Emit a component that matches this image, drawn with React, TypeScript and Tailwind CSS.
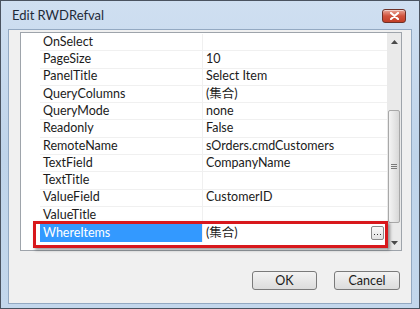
import React from "react";

const rows: [string, string][] = [
  ["OnSelect", ""],
  ["PageSize", "10"],
  ["PanelTitle", "Select Item"],
  ["QueryColumns", "(集合)"],
  ["QueryMode", "none"],
  ["Readonly", "False"],
  ["RemoteName", "sOrders.cmdCustomers"],
  ["TextField", "CompanyName"],
  ["TextTitle", ""],
  ["ValueField", "CustomerID"],
  ["ValueTitle", ""],
  ["WhereItems", "(集合)"],
];

const font = { fontFamily: 'Lato, "Noto Sans CJK TC", sans-serif' };

export default function App() {
  return (
    <div
      className="relative w-[420px] h-[309px] overflow-hidden border border-[#4a5360] bg-gradient-to-b from-[#cfdff1] via-[#bfd4ea] to-[#c3d7ec] text-[12.5px] text-[#1b1b1b]"
      style={font}
    >
      {/* Title bar */}
      <div className="flex h-[28px] items-center justify-between pl-[11px] pr-[13px] pt-[2px]">
        <span className="text-[13px] text-[#1e2a38]">Edit RWDRefval</span>
        <div className="mb-[1px] flex h-[14px] w-[24px] items-center justify-center rounded-[3px] border border-[#6e3128] bg-gradient-to-b from-[#e8a598] via-[#d0533d] to-[#c33f27] shadow-[inset_0_1px_0_rgba(255,255,255,0.5)]">
          <svg width="9" height="8" viewBox="0 0 9 8">
            <path d="M1 1 L8 7 M8 1 L1 7" stroke="#ffffff" strokeWidth="2.2" strokeLinecap="round" />
          </svg>
        </div>
      </div>

      {/* Client area */}
      <div className="mx-[7px] flex h-[275px] flex-col border border-[#93a9c2] bg-[#f0f0f0]">
        {/* Property grid */}
        <div className="ml-[11px] mr-[9px] mt-[2px] flex h-[219px] border border-[#9ea4ab] bg-white">
          <div className="flex flex-1 flex-col pt-[1px]">
            {rows.map(([name, value]) => {
              const selected = name === "WhereItems";
              return (
                <div key={name} className="flex h-[17.3px] items-stretch">
                  <div className="w-[19px] shrink-0 bg-white" />
                  <div
                    className={
                      selected
                        ? "flex w-[162px] shrink-0 items-center bg-[#3399ff] pl-[3px] text-white"
                        : "flex w-[162px] shrink-0 items-center border-b border-[#f0f0f0] pl-[3px]"
                    }
                  >
                    {name}
                  </div>
                  <div className="w-[1px] shrink-0 bg-[#f0f0f0]" />
                  <div
                    className={
                      selected
                        ? "flex flex-1 items-center justify-between pl-[3px] pr-[3px]"
                        : "flex flex-1 items-center border-b border-[#f0f0f0] pl-[3px]"
                    }
                  >
                    <span>{value}</span>
                    {selected && (
                      <div className="flex h-[14px] w-[13px] items-end justify-center rounded-[2px] border border-[#8a8a8a] bg-gradient-to-b from-[#fafafa] to-[#e2e2e2] pb-[3px]">
                        <svg width="7" height="2" viewBox="0 0 7 2">
                          <rect x="0" y="0" width="1" height="1" fill="#333" />
                          <rect x="3" y="0" width="1" height="1" fill="#333" />
                          <rect x="6" y="0" width="1" height="1" fill="#333" />
                        </svg>
                      </div>
                    )}
                  </div>
                </div>
              );
            })}
          </div>
          {/* Scrollbar */}
          <div className="flex w-[14px] shrink-0 flex-col items-center bg-[#eaeaea]">
            <div className="flex h-[18px] w-full items-center justify-center">
              <svg width="7" height="4" viewBox="0 0 7 4">
                <path d="M0 4 L3.5 0 L7 4 Z" fill="#4a4a4a" />
              </svg>
            </div>
            <div className="mt-[59px] flex h-[113px] w-[12px] items-center justify-center rounded-[2px] border border-[#a8a8a8] bg-gradient-to-r from-[#f4f4f4] to-[#d8d8d8]">
              <svg width="6" height="5" viewBox="0 0 6 5">
                <rect x="0" y="0" width="6" height="1" fill="#7a7a7a" />
                <rect x="0" y="2" width="6" height="1" fill="#7a7a7a" />
                <rect x="0" y="4" width="6" height="1" fill="#7a7a7a" />
              </svg>
            </div>
            <div className="flex flex-1 items-end pb-[5px]">
              <svg width="7" height="4" viewBox="0 0 7 4">
                <path d="M0 0 L3.5 4 L7 0 Z" fill="#4a4a4a" />
              </svg>
            </div>
          </div>
        </div>

        {/* Buttons */}
        <div className="mr-[11px] mt-[20px] flex justify-end gap-[17px]">
          <button className="h-[19px] w-[65px] rounded-[3px] border border-[#7a7a7a] bg-gradient-to-b from-[#f3f3f3] to-[#dcdcdc] text-[12.5px] text-[#1b1b1b]">
            OK
          </button>
          <button className="h-[19px] w-[66px] rounded-[3px] border border-[#7a7a7a] bg-gradient-to-b from-[#f3f3f3] to-[#dcdcdc] text-[12.5px] text-[#1b1b1b]">
            Cancel
          </button>
        </div>
      </div>

      {/* Annotation box */}
      <div className="absolute left-[32px] top-[220px] h-[27px] w-[355px] border-[3px] border-[#d8181c] shadow-[2px_2px_3px_rgba(0,0,0,0.4)]" />
    </div>
  );
}
